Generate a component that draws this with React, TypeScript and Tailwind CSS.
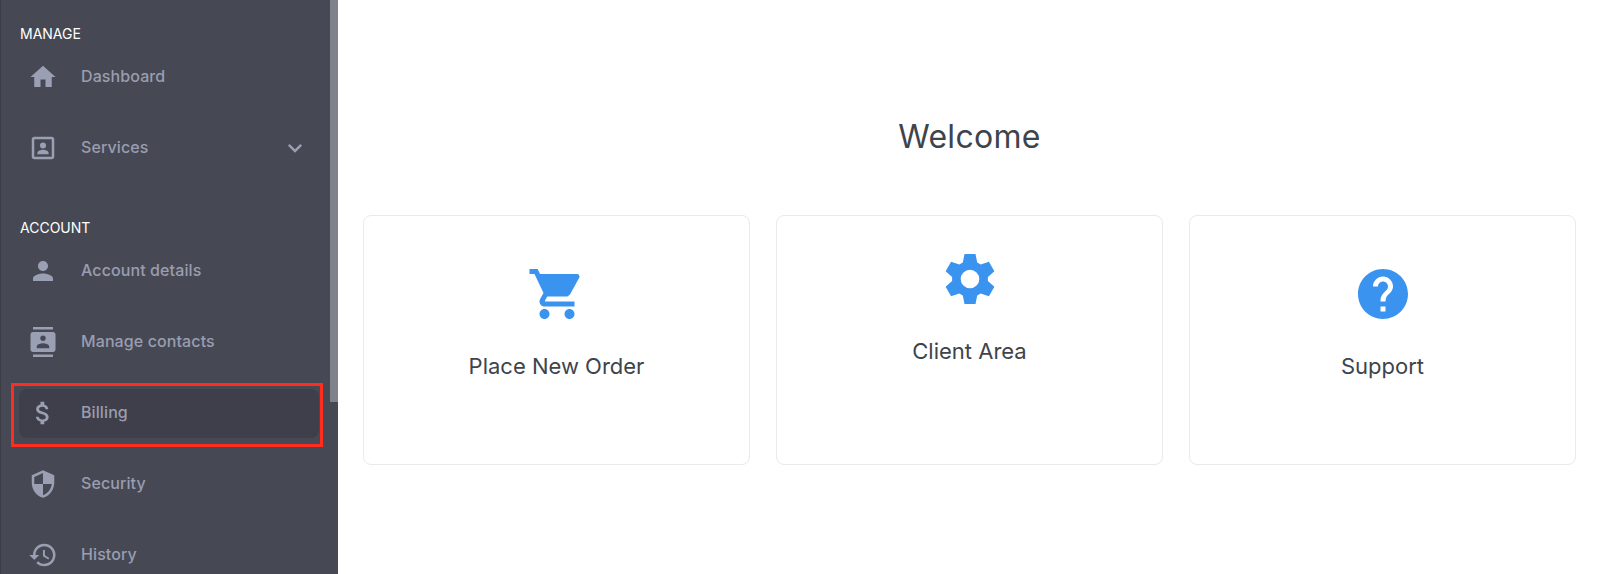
import React from "react";
import {
  MdHome,
  MdPerson,
  MdContacts,
  MdAttachMoney,
  MdSecurity,
  MdHistory,
  MdShoppingCart,
  MdHelp,
  MdExpandMore,
} from "react-icons/md";

const font = "font-['Inter','Liberation_Sans',sans-serif]";

type IconType = React.ComponentType<{ size?: number; className?: string }>;

function PortraitBox({ size = 30, className }: { size?: number; className?: string }) {
  return (
    <svg width={size} height={size} viewBox="0 0 24 24" fill="currentColor" className={className}>
      <path d="M19 3H5c-1.1 0-2 .9-2 2v14c0 1.1.9 2 2 2h14c1.1 0 2-.9 2-2V5c0-1.1-.9-2-2-2zm0 16H5V5h14v14z" />
      <circle cx="12" cy="10" r="2.4" />
      <path d="M7.500 17v-1c0-1.700 3-2.600 4.500-2.600s4.500.9 4.500 2.600v1h-9z" />
    </svg>
  );
}

function gearPath() {
  const pts: string[] = [];
  const tooth: [number, number][] = [
    [-7.2, -16.5],
    [-5.5, -25],
    [5.5, -25],
    [7.2, -16.5],
  ];
  for (let i = 0; i < 6; i++) {
    const a = (i * Math.PI) / 3;
    for (const [x, y] of tooth) {
      const rx = x * Math.cos(a) - y * Math.sin(a);
      const ry = x * Math.sin(a) + y * Math.cos(a);
      pts.push(`${rx.toFixed(2)} ${ry.toFixed(2)}`);
    }
  }
  return `M${pts.join("L")}Z M9.3 0A9.3 9.3 0 1 0 -9.3 0A9.3 9.3 0 1 0 9.3 0Z`;
}

function Gear({ className }: { size?: number; className?: string }) {
  return (
    <svg width={50} height={50} viewBox="-25 -25 50 50" fill="currentColor" fillRule="evenodd" className={className}>
      <path d={gearPath()} />
    </svg>
  );
}

function NavItem({ icon: Icon, label, chevron }: { icon: IconType; label: string; chevron?: boolean }) {
  return (
    <div className="flex h-[71px] items-center pl-[28px] pr-[21px]">
      <span className="flex w-[30px] justify-center">
        <Icon size={30} className="text-[#9b9fb4]" />
      </span>
      <span className="ml-[23px] flex-1 pb-[2px] text-[16px] font-medium tracking-[0.1px] text-[#9a9db1]">{label}</span>
      {chevron && <MdExpandMore size={28} className="text-[#9b9fb4]" />}
    </div>
  );
}

function Card({ icon: Icon, label, lift }: { icon: IconType; label: string; lift?: boolean }) {
  return (
    <div
      className={`flex h-[250px] flex-col items-center rounded-[8px] border border-[#e9eaee] bg-white ${
        lift ? "pt-[38px]" : "pt-[48px]"
      }`}
    >
      <Icon size={60} className="text-[#3b93f0]" />
      <div className={`${lift ? "mt-[32px]" : "mt-[27px]"} text-[22px] leading-[30px] text-[#3e444b]`}>{label}</div>
    </div>
  );
}

export default function App() {
  return (
    <div className={`flex h-[574px] w-[1600px] overflow-hidden bg-white ${font}`}>
      <aside className="flex w-[338px] shrink-0 border-l border-[#3c3e46] bg-[#464953]">
        <nav className="w-[329px] shrink-0 pt-[25px]">
          <div className="-ml-[1px] h-[17px] pl-[20px] text-[14px] font-normal leading-[17px] text-white">MANAGE</div>
          <div className="-ml-[1px] -mt-[1px]">
            <NavItem icon={MdHome} label="Dashboard" />
            <NavItem icon={PortraitBox} label="Services" chevron />
          </div>
          <div className="-ml-[1px] mt-[36px] h-[17px] pl-[20px] text-[14px] font-normal leading-[17px] text-white">ACCOUNT</div>
          <div className="-ml-[1px] -mt-[1px]">
            <NavItem icon={MdPerson} label="Account details" />
            <NavItem icon={MdContacts} label="Manage contacts" />
            <div className="relative">
              <div className="absolute left-[19px] top-[12px] h-[49px] w-[300px] rounded-[8px] bg-[#3e3f4a]" />
              <div className="absolute left-[11px] top-[6px] h-[64px] w-[312px] border-[3px] border-[#ff2d20]" />
              <div className="relative">
                <NavItem icon={MdAttachMoney} label="Billing" />
              </div>
            </div>
            <NavItem icon={MdSecurity} label="Security" />
            <NavItem icon={MdHistory} label="History" />
          </div>
        </nav>
        <div className="w-[8px] shrink-0">
          <div className="h-[402px] bg-[#7f818b]" />
        </div>
      </aside>
      <main className="flex-1 pl-[25px] pr-[24px]">
        <h1 className="mt-[115px] text-center text-[32px] font-normal leading-[44px] tracking-[0.3px] text-[#3e444b]">
          Welcome
        </h1>
        <div className="mt-[56px] grid grid-cols-3 gap-[26px]">
          <Card icon={MdShoppingCart} label="Place New Order" />
          <Card icon={Gear} label="Client Area" lift />
          <Card icon={MdHelp} label="Support" />
        </div>
      </main>
    </div>
  );
}
